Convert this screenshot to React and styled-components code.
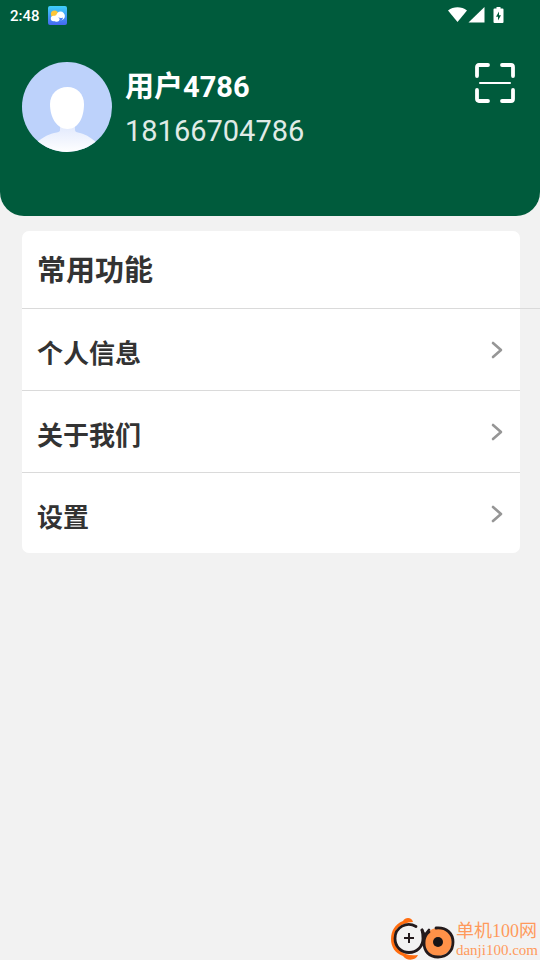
import React from "react";
import styled, { createGlobalStyle } from "styled-components";

const menuItems = [
    { label: "个人信息", link: "#profile" },
    { label: "关于我们", link: "#about" },
    { label: "设置", link: "#settings" },
];

const WeatherIcon = () => (
    <svg width="20" height="20" viewBox="0 0 20 20" aria-hidden="true">
        <defs>
            <linearGradient id="weather-sky" x1="0" y1="0" x2="0" y2="1">
                <stop offset="0" stopColor="#3fd0fb" />
                <stop offset="1" stopColor="#4668f2" />
            </linearGradient>
        </defs>
        <rect width="19" height="19" rx="2" fill="url(#weather-sky)" />
        <circle cx="6.5" cy="8" r="3.6" fill="#fdc637" />
        <circle cx="12.5" cy="10" r="4.4" fill="#fff" />
        <circle cx="5.5" cy="12.5" r="2.7" fill="#fff" />
        <circle cx="8.5" cy="12.5" r="3.2" fill="#fff" />
        <path d="M10 11q2.500 1.800 5 .5c0 2-1.400 3.300-3.800 3.500q1.300-2-1.200-4z" fill="#4a80f6" />
    </svg>
);

const SystemIcons = () => (
    <svg width="58" height="18" viewBox="0 0 58 18" fill="#fff" aria-hidden="true">
        <path d="M0 3.500C5.500-.8 13.500-.8 19 3.500L9.500 15z" />
        <path d="M36.500 0v15.500H20.500z" />
        <path
            fillRule="evenodd"
            d="M48.500 0h4v1.500h2q1 0 1 1v12.500q0 1-1 1h-8q-1 0-1-1v-12.500q0-1 1-1h2zM51 4.500l-3 5.300h2v3.700l3-5.300h-2z"
        />
    </svg>
);

const Avatar = () => (
    <AvatarImage viewBox="0 0 90 90" role="img" aria-label="头像">
        <defs>
            <clipPath id="avatar-clip">
                <circle cx="45" cy="45" r="45" />
            </clipPath>
            <linearGradient id="avatar-body" x1="0" y1="0" x2="0" y2="1">
                <stop offset="0" stopColor="#dbe5fc" />
                <stop offset="0.300" stopColor="#e8eefd" />
                <stop offset="1" stopColor="#fff" />
            </linearGradient>
        </defs>
        <g clipPath="url(#avatar-clip)">
            <rect width="90" height="90" fill="#bdd2fb" />
            <path
                d="M38 60h15v8c0 2 2 2.500 5 3 7 2 12 5 19 12v8H12v-8c7-7 13-10 20-12 4-1 6-1 6-3z"
                fill="url(#avatar-body)"
            />
            <path
                d="M45.500 25C55 25 62 32 62 42c0 14-6 25-16.500 25S28 56 28 42c0-10 7.500-17 17.500-17z"
                fill="#fff"
            />
        </g>
    </AvatarImage>
);

const ScanIcon = () => (
    <svg width="40" height="40" viewBox="0 0 40 40" fill="none" stroke="#fff" strokeLinecap="round" aria-hidden="true">
        <g strokeWidth="3.800" strokeLinejoin="round">
            <path d="M2 13V4q0-2 2-2h9M27 2h9q2 0 2 2v9M38 27v9q0 2-2 2h-9M13 38H4q-2 0-2-2v-9" />
        </g>
        <path d="M5 20h30" strokeWidth="2" />
    </svg>
);

const Chevron = () => (
    <svg width="12" height="18" viewBox="0 0 12 18" fill="none" stroke="#969696" strokeWidth="2.600" aria-hidden="true">
        <path d="M2 2l8 7-8 7" strokeLinecap="round" strokeLinejoin="round" />
    </svg>
);

const SiteLogo = () => (
    <svg width="64" height="42" viewBox="0 0 64 42" fill="none" aria-hidden="true">
        <path
            d="M22 4C21-1 14-1 12 3 4 6 0 13 0 21c0 8 4 14 12 17 3 5 13 5 15-1-7 1-13 0-17-4-4-4-7-7-7-12C3 11 9 5 22 4z"
            fill="#ff6d10"
        />
        <path
            d="M25 8.500C16 3 4 9 4 20.500c0 8 6 14 14 14s14-6 14-14c0-3 0-5-1-8.500"
            stroke="#231a1c"
            strokeWidth="2.800"
            strokeLinecap="round"
        />
        <path d="M31 12q1 3 3 5l4-5" stroke="#231a1c" strokeWidth="2.800" strokeLinecap="round" />
        <path d="M18 15v10M13 20h10" stroke="#231a1c" strokeWidth="2" />
        <circle cx="47" cy="24" r="14" fill="#ff9148" />
        <path
            d="M45 10c11-1 17 6 17 14 0 9-6 15-15 15s-14-6-14-14c0-5 1-8 5-11"
            stroke="#231a1c"
            strokeWidth="2.800"
            strokeLinecap="round"
        />
        <circle cx="47" cy="24" r="5" fill="#181416" />
    </svg>
);

const App = () => (
    <>
        <GlobalStyle />
        <Page>
            <Header>
                <StatusBar>
                    <Clock>2:48</Clock>
                    <WeatherIcon />
                    <StatusRight>
                        <SystemIcons />
                    </StatusRight>
                </StatusBar>
                <Profile>
                    <Avatar />
                    <UserMeta>
                        <UserName>用户4786</UserName>
                        <Phone>18166704786</Phone>
                    </UserMeta>
                    <ScanButton type="button" aria-label="扫一扫">
                        <ScanIcon />
                    </ScanButton>
                </Profile>
            </Header>
            <Card>
                <CardTitle>常用功能</CardTitle>
                {menuItems.map(({ label, link }) => (
                    <MenuLink key={label} href={link}>
                        <span>{label}</span>
                        <Chevron />
                    </MenuLink>
                ))}
            </Card>
            <Footer>
                <SiteLogo />
                <SiteText>
                    <SiteName>单机100网</SiteName>
                    <SiteDomain>danji100.com</SiteDomain>
                </SiteText>
            </Footer>
        </Page>
    </>
);

const GlobalStyle = createGlobalStyle`
  * {
    box-sizing: border-box;
  }
  body {
    margin: 0;
    background: #f2f2f2;
    color: #333;
    font-family: Roboto, "Noto Sans CJK SC", sans-serif;
  }
  svg {
    display: block;
    flex-shrink: 0;
  }
`;

const Page = styled.div`
  display: flex;
  flex-direction: column;
  min-height: 100vh;
  overflow-x: hidden;
`;

const Header = styled.header`
  padding-bottom: 63px;
  border-radius: 0 0 24px 24px;
  background: #005b3c;
  color: #fff;
`;

const StatusBar = styled.div`
  display: flex;
  align-items: center;
  gap: 8px;
  height: 32px;
  padding: 0 34px 0 10px;
`;

const Clock = styled.span`
  font-size: 15px;
  font-weight: 500;
`;

const StatusRight = styled.div`
  margin-left: auto;
`;

const Profile = styled.div`
  display: flex;
  align-items: flex-start;
  padding: 30px 25px 0 22px;
`;

const AvatarImage = styled.svg`
  width: 90px;
  height: 90px;
`;

const UserMeta = styled.div`
  flex: 1;
  padding: 3px 0 0 13px;
  font-size: 29px;
  line-height: 44px;
`;

const UserName = styled.div`
  font-weight: 700;
`;

const Phone = styled.div`
  color: #e0ebe7;
`;

const ScanButton = styled.button`
  margin-top: 1px;
  padding: 0;
  border: 0;
  background: none;
  cursor: pointer;
`;

const Card = styled.nav`
  display: flex;
  flex-direction: column;
  margin: 15px 20px 0 22px;
  border-radius: 7px;
  background: #fff;
`;

// the title rule runs past the card up to the screen edge
const CardTitle = styled.h2`
  margin: 0 -20px 0 0;
  padding: 3px 15px 0;
  border-bottom: 1px solid #dadada;
  font-size: 29px;
  font-weight: 700;
  line-height: 74px;
`;

const MenuLink = styled.a`
  display: flex;
  align-items: center;
  justify-content: space-between;
  padding: 10px 17px 0 15px;
  color: #333;
  font-size: 26px;
  font-weight: 700;
  line-height: 71px;
  text-decoration: none;
  &:not(:last-child) {
    border-bottom: 1px solid #dadada;
  }
  &:last-child {
    line-height: 70px;
  }
  & > svg {
    margin-bottom: 9px;
  }
`;

const Footer = styled.footer`
  display: flex;
  align-items: center;
  justify-content: flex-end;
  gap: 1px;
  margin-top: auto;
  padding-right: 2px;
`;

const SiteText = styled.div`
  color: #ff9a5c;
  font-family: "Liberation Serif", "Noto Sans CJK SC", serif;
`;

const SiteName = styled.div`
  font-size: 18px;
  font-weight: 400;
  line-height: 22px;
`;

const SiteDomain = styled.div`
  font-size: 15px;
  line-height: 16px;
`;

export default App;
